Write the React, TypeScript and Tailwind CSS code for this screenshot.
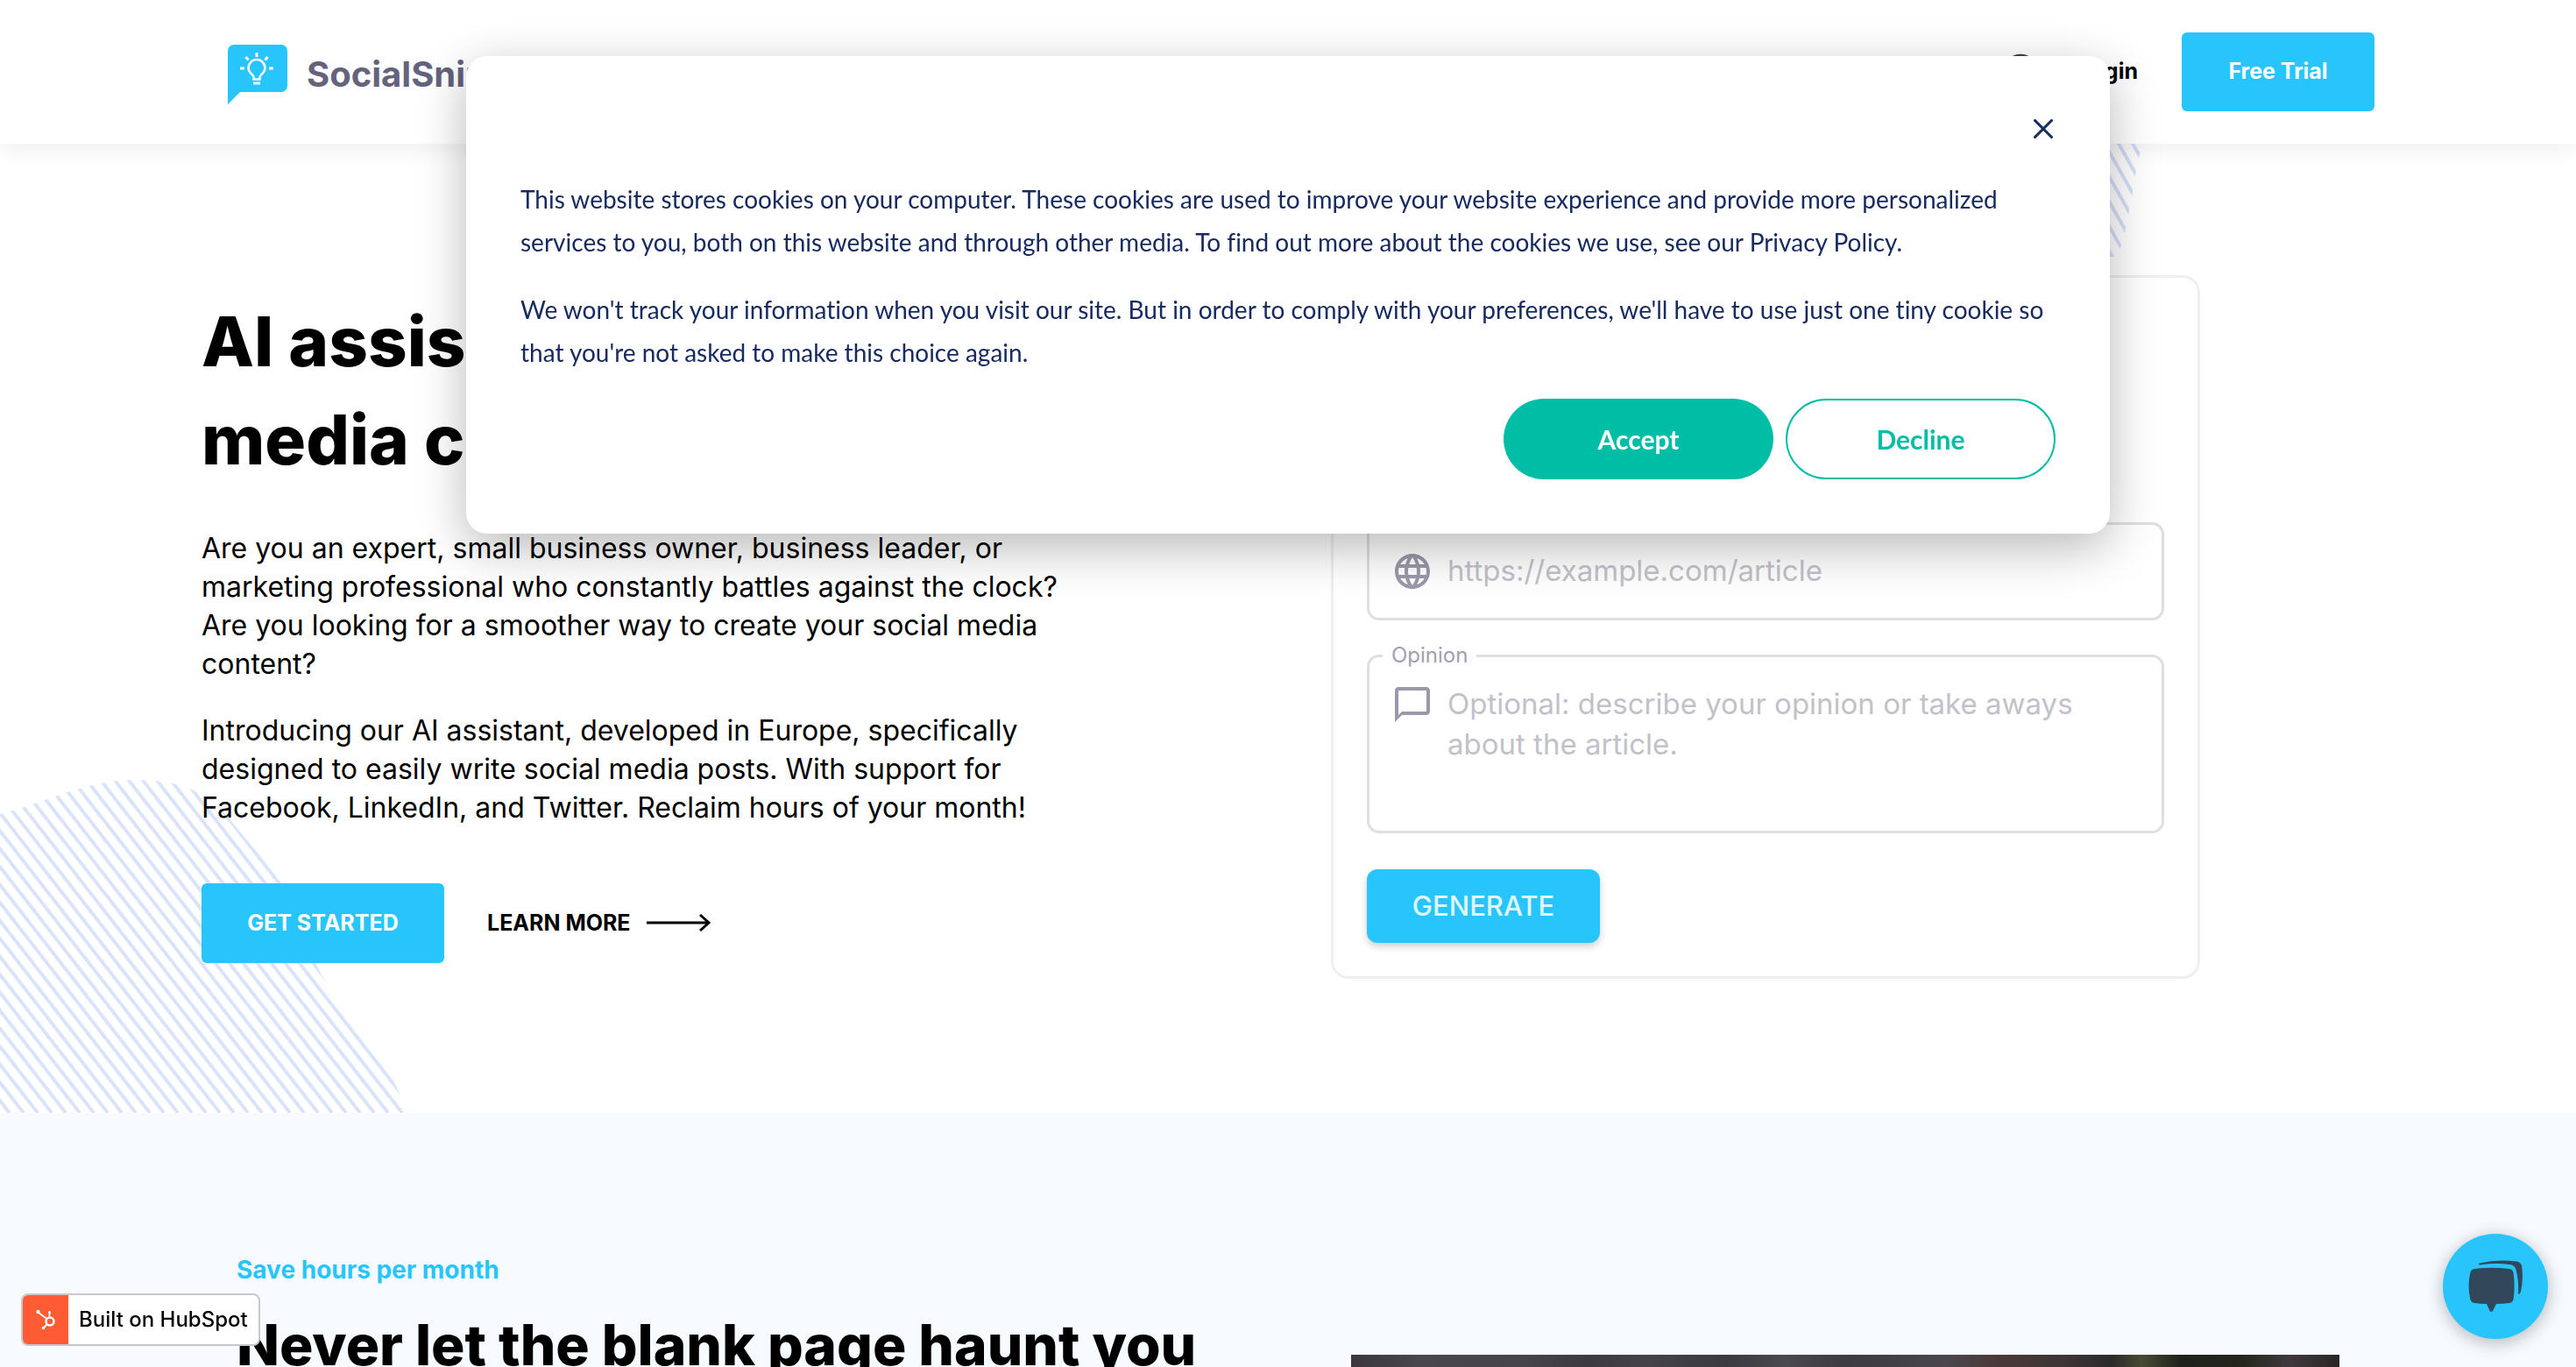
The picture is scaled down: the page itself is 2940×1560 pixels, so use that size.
import { CircleUser, X } from 'lucide-react';
import { MdChatBubbleOutline, MdLanguage } from 'react-icons/md';

const LogoMark = () => (
  <svg className="h-[68px] w-[68px]" viewBox="0 0 68 68" fill="none" aria-hidden="true">
    <path d="M7 0H61a7 7 0 0 1 7 7V47a7 7 0 0 1-7 7H14L0 68V7a7 7 0 0 1 7-7Z" fill="#27c5fb" />
    <g stroke="#fff" strokeWidth="3">
      <path d="M29.5 39.5V37c0-3-6-4.500-6-10.500a9.500 9.500 0 0 1 19 0c0 6-6 7.500-6 10.500v2.500Z" strokeWidth="2.500" />
      <path d="M29 44h8" />
      <path d="M33 9v5M20.500 14l3 3.500M45.500 14l-3 3.500M14 27h5M47 27h5" />
    </g>
  </svg>
);

const SprocketIcon = () => (
  <svg className="h-6 w-6" viewBox="0 0 24 24" fill="none" stroke="#fff" aria-hidden="true">
    <circle cx="17" cy="14" r="4.500" strokeWidth="2.500" />
    <path d="M16.500 9V4M13.500 11 4 4M13.500 17.500 10 21" strokeWidth="1.800" />
    <circle cx="16.500" cy="3.500" r="1.500" fill="#fff" stroke="none" />
    <circle cx="3.500" cy="3" r="2.200" fill="#fff" stroke="none" />
    <circle cx="9.500" cy="21.500" r="1.800" fill="#fff" stroke="none" />
  </svg>
);

const ChatIcon = () => (
  <svg className="h-[120px] w-[120px]" viewBox="0 0 120 120" fill="#33475b" aria-hidden="true">
    <path d="M36 40Q55 37.500 76 40Q80 40.500 80.700 45Q82.500 59 80.700 74Q80 78.500 76 79Q68 80 61 80L57 88Q55.300 90 53.600 88L50 80Q43 80 36 79Q32 78.500 31.200 74Q28 59 31.200 45Q32 40.500 36 40Z" />
    <path d="M42 33.500Q62 28.500 84 31.500Q89.500 32 90.300 38Q92 52 89 66Q88 69 86.300 69Q85.800 68 86.200 66Q86.500 52 83.500 41Q82 35.500 76 35Q60 32.800 43 35.500Q39.500 35 42 33.500Z" />
  </svg>
);

const LeftStripes = () => (
  <svg className="absolute bottom-0 left-0 h-[382px] w-[466px]" viewBox="0 0 466 382" aria-hidden="true">
    <clipPath id="left-blob">
      <path d="M0 41C50 29 95 2 155 2C205 2 236 16 258 42C286 76 304 96 324 122C342 150 350 194 368 226C394 272 438 316 456 360L466 382H0Z" />
    </clipPath>
    <g clipPath="url(#left-blob)" stroke="#d9e4fa" strokeWidth="4">
      {Array.from({ length: 60 }, (_, i) => (
        <line key={i} x1={-621 + i * 16} y1="-18" x2={-309 + i * 16} y2="382" />
      ))}
    </g>
  </svg>
);

const RightStripes = () => (
  <svg className="absolute top-0 right-[495px] h-[130px] w-[200px]" viewBox="0 0 200 130" aria-hidden="true">
    <clipPath id="right-blob">
      <path d="M0 0H200L195 21L191 41L188 61L184 81L180 101L175 119L168 129H0Z" />
    </clipPath>
    <g clipPath="url(#right-blob)" stroke="#d5dffa" strokeWidth="4">
      {Array.from({ length: 20 }, (_, i) => (
        <line key={i} x1={-88 + i * 16} y1="-9" x2={-8 + i * 16} y2="133" />
      ))}
    </g>
  </svg>
);

const Header = () => (
  <header className="relative z-10 flex h-[164px] items-center justify-between bg-white pr-[230px] pl-[260px] shadow-[0_10px_20px_rgba(0,0,0,0.05)]">
    <a href="#" className="flex items-center gap-[22px] pt-[6px]">
      <LogoMark />
      <span className="text-[40px] font-bold text-[#64627c]">SocialSnippet</span>
    </a>
    <nav className="flex items-center text-[25px] font-bold">
      <a href="#" aria-label="Account" className="mr-[44px]">
        <CircleUser size={44} color="#444" />
      </a>
      <a href="#" className="mr-[50px]">Login</a>
      <a href="#" className="flex h-[90px] w-[220px] items-center justify-center rounded-md bg-[#27c5fb] text-white">
        Free Trial
      </a>
    </nav>
  </header>
);

const GenerateForm = () => (
  <form className="ml-[49px] w-4/5 rounded-[20px] border-3 border-[#efeff0] px-[38px] pt-[279px] pb-[38px]">
    <label className="flex h-[112px] items-center gap-4 rounded-[14px] border-3 border-[#dfdfe2] px-[25px]">
      <MdLanguage size={48} color="#9a98a9" className="shrink-0" aria-hidden="true" />
      <input
        type="url"
        aria-label="Article"
        placeholder="https://example.com/article"
        className="w-full bg-transparent text-[33px] outline-none placeholder:text-[#c2c1ca]"
      />
    </label>
    <fieldset className="mt-6 rounded-[14px] border-3 border-[#dfdfe2] px-[15px]">
      <legend className="px-[10px] text-2xl text-[#a09fae]">
        <label htmlFor="opinion">Opinion</label>
      </legend>
      <div className="flex items-start gap-4 px-[10px] pt-4">
        <MdChatBubbleOutline size={48} color="#9a98a9" className="shrink-0" aria-hidden="true" />
        <textarea
          id="opinion"
          placeholder="Optional: describe your opinion or take aways about the article."
          className="block h-[168px] w-full resize-none bg-transparent text-[33px] leading-[46px] outline-none placeholder:text-[#c2c1ca]"
        />
      </div>
    </fieldset>
    <button
      type="button"
      className="mt-[41px] h-[84px] w-[266px] rounded-[12px] bg-[#27c5fb] text-[31px] font-medium text-white/85 shadow-[0_4px_8px_rgba(0,0,0,0.2)]"
    >
      GENERATE
    </button>
  </form>
);

const Hero = () => (
  <section className="relative overflow-hidden px-[230px] pt-[150px] pb-[153px]">
    <LeftStripes />
    <RightStripes />
    <div className="relative grid grid-cols-2 items-start">
      <div className="pt-5">
        <h1 className="text-[78px] leading-[112px] font-extrabold">
          AI assistant for social
          <br />
          media content
        </h1>
        <div className="mt-[46px] w-10/12 space-y-8 text-[32px] leading-[44px]">
          <p>
            Are you an expert, small business owner, business leader, or marketing professional who constantly battles
            against the clock? Are you looking for a smoother way to create your social media content?
          </p>
          <p>
            Introducing our AI assistant, developed in Europe, specifically designed to easily write social media posts.
            With support for Facebook, LinkedIn, and Twitter. Reclaim hours of your month!
          </p>
        </div>
        <div className="mt-16 flex items-center gap-[49px] text-[25px] font-bold">
          <a href="#" className="flex h-[91px] w-[277px] items-center justify-center rounded-md bg-[#27c5fb] text-white">
            GET STARTED
          </a>
          <a href="#" className="flex items-center gap-[18px]">
            LEARN MORE
            <svg className="h-6 w-[74px]" viewBox="0 0 74 24" fill="none" stroke="#000" strokeWidth="3" aria-hidden="true">
              <path d="M0 11H71M61 2l10 9-10 9" />
            </svg>
          </a>
        </div>
      </div>
      <GenerateForm />
    </div>
  </section>
);

const SaveHours = () => (
  <section className="grid grid-cols-2 gap-36 bg-[#f7fbff] px-[270px] pt-[159px] pb-40">
    <div>
      <p className="text-[28px] leading-[40px] font-bold text-[#27c5fb]">Save hours per month</p>
      <h2 className="mt-[26px] text-[64px] leading-[80px] font-extrabold">Never let the blank page haunt you</h2>
    </div>
    <div
      role="img"
      aria-label="Office desk"
      className="mt-[117px] h-[640px] bg-[linear-gradient(90deg,#3a363c_0%,#49464d_7%,#46434a_18%,#3c3a40_24%,#454249_30%,#3a3a40_38%,#4a494e_44%,#3e3b40_50%,#49474c_60%,#4a3838_66%,#3d3536_72%,#2b292a_77%,#474b33_80%,#1e201c_84%,#24261d_90%,#3f393d_95%,#2a2625_100%)]"
    />
  </section>
);

const CookieBanner = () => (
  <div
    role="dialog"
    aria-label="Cookies"
    className="fixed inset-x-[532px] top-16 z-20 rounded-3xl bg-white p-[62px] font-[Lato,sans-serif] text-[#172b61] shadow-[0_16px_56px_rgba(0,0,0,0.28)] [font-variant-ligatures:no-common-ligatures]"
  >
    <div className="flex h-[42px] justify-end">
      <button type="button" aria-label="Close" className="flex w-[28px] items-center justify-center">
        <X size={38} strokeWidth={2} className="shrink-0" />
      </button>
    </div>
    <div className="mt-[35px] space-y-7 text-[28px] leading-[49px]">
      <p>
        This website stores cookies on your computer. These cookies are used to improve your website experience and
        provide more personalized services to you, both on this website and through other media. To find out more about
        the cookies we use, see our Privacy Policy.
      </p>
      <p>
        We won't track your information when you visit our site. But in order to comply with your preferences, we'll
        have to use just one tiny cookie so that you're not asked to make this choice again.
      </p>
    </div>
    <div className="mt-7 flex justify-end gap-[14px] text-[30px] font-bold">
      <button type="button" className="h-[92px] w-[308px] rounded-full bg-[#00bda5] text-white">
        Accept
      </button>
      <button type="button" className="h-[92px] w-[308px] rounded-full border-2 border-[#00bda5] text-[#00bda5]">
        Decline
      </button>
    </div>
  </div>
);

const App = () => {
  return (
    <div className="h-screen overflow-hidden bg-white font-[Inter,sans-serif] text-black">
      <Header />
      <main>
        <Hero />
        <SaveHours />
      </main>

      <CookieBanner />

      <a
        href="#"
        className="fixed bottom-6 left-6 z-20 flex h-[60px] overflow-hidden rounded-lg border-2 border-[#c8c8c8] bg-white text-2xl font-medium"
      >
        <span className="flex w-[52px] items-center justify-center bg-[#ff5c35]">
          <SprocketIcon />
        </span>
        <span className="flex items-center px-3">Built on HubSpot</span>
      </a>

      <button
        type="button"
        aria-label="Open chat"
        className="fixed right-8 bottom-8 z-20 rounded-full bg-[#27c5fb] shadow-[0_4px_20px_rgba(0,0,0,0.28)]"
      >
        <ChatIcon />
      </button>
    </div>
  );
};

export default App;
